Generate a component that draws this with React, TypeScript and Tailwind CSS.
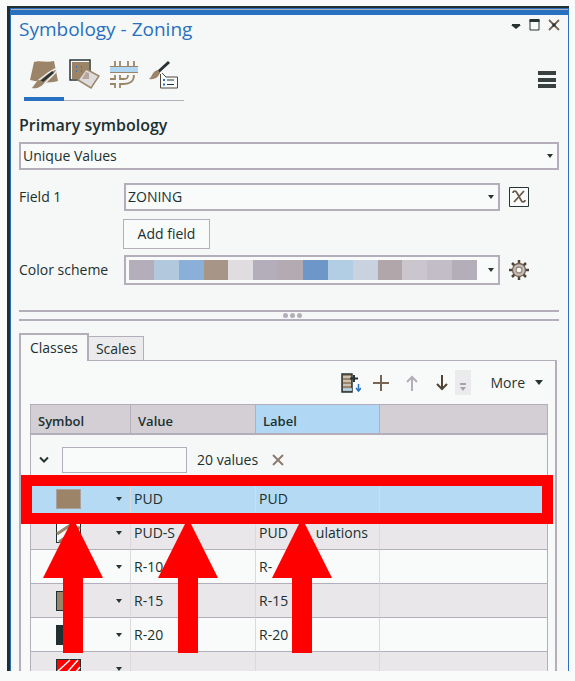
import React from "react";

const rows = [
  { value: "PUD", label: "PUD", tail: "", symbol: "solid", bg: "bg-[#b5daf3]" },
  { value: "PUD-S", label: "PUD", tail: "ulations", symbol: "hatch", bg: "bg-[#e9e7e9]" },
  { value: "R-10", label: "R-", tail: "", symbol: "none", bg: "bg-[#f9fbfa]" },
  { value: "R-15", label: "R-15", tail: "", symbol: "outlined", bg: "bg-[#e9e7e9]" },
  { value: "R-20", label: "R-20", tail: "", symbol: "dark", bg: "bg-[#f9fbfa]" },
  { value: "", label: "", tail: "", symbol: "redhatch", bg: "bg-[#e9e7e9]" },
];

const ramp = [
  "bg-[#b4aeba]", "bg-[#b2c8dc]", "bg-[#8ab0d9]", "bg-[#a79588]", "bg-[#e0dde1]",
  "bg-[#b4aeba]", "bg-[#b3aab2]", "bg-[#6d97c9]", "bg-[#b1cee5]", "bg-[#c9d3e0]",
  "bg-[#b1a6a9]", "bg-[#cbc6ce]", "bg-[#c3bdc7]", "bg-[#b4aeba]",
];

function Caret() {
  return (
    <svg viewBox="0 0 6 4" className="h-1 w-1.5 shrink-0" aria-hidden="true">
      <path d="M0 0h6L3 4z" fill="#283434" />
    </svg>
  );
}

function Dropdown({ id, label, value }: { id: string; label?: string; value: string }) {
  return (
    <div className="relative min-w-0 flex-1">
      <select
        id={id}
        aria-label={label}
        defaultValue={value}
        className="block h-7 w-full appearance-none border-2 border-[#b4aeba] bg-[#f9fbfa] pl-0.5"
      >
        <option>{value}</option>
      </select>
      <span className="pointer-events-none absolute inset-y-0 right-1.5 flex items-center">
        <Caret />
      </span>
    </div>
  );
}

function Swatch({ kind }: { kind: string }) {
  if (kind === "none") return <span className="h-5 w-[25px]" />;
  const fills: Record<string, string> = { dark: "#203030", redhatch: "#ff0000", hatch: "#f9fbfa" };
  const fill = fills[kind] ?? "#9c8468";
  const edge = kind === "solid" ? "#a9a0a0" : "#203030";
  return (
    <svg viewBox="0 0 25 20" className="h-5 w-[25px] shrink-0" aria-hidden="true">
      <rect x=".5" y=".5" width="24" height="19" fill={fill} stroke={edge} />
      {kind === "hatch" && <path d="M1 11 16 1M3 19 24 4M16 19l8-6" stroke="#9c8468" strokeWidth="3" />}
      {kind === "redhatch" && (
        <path d="M1 13 14 1M6 19 22 1M15 19l9-11" stroke="#f9fbfa" strokeWidth="1.5" />
      )}
    </svg>
  );
}

function Arrow({ className }: { className: string }) {
  return (
    <svg viewBox="0 0 60 134" className={`absolute top-[115px] h-[134px] w-[60px] ${className}`} aria-hidden="true">
      <path d="M30 -1 60 59H40V134H20V59H0z" fill="#ff0000" />
    </svg>
  );
}

function TitleBar() {
  return (
    <header className="flex h-[27px] items-center justify-between pr-2 pl-2">
      <h1 className="text-[19px] leading-6 text-[#2870c0]">Symbology - Zoning</h1>
      <div className="flex items-center gap-2 pb-2">
        <button aria-label="Window options" className="pt-1">
          <svg viewBox="0 0 10 6" className="h-1.5 w-2.5"><path d="M1 0h8v1h1L5 5 0 1h1z" fill="#283434" /></svg>
        </button>
        <button aria-label="Maximize">
          <svg viewBox="0 0 11 12" className="h-3 w-[11px]">
            <path d="M1 1v10h9V1z" fill="#f9fbfa" stroke="#283434" />
            <path d="M.5 1.500h10" stroke="#283434" strokeWidth="3" />
          </svg>
        </button>
        <button aria-label="Close">
          <svg viewBox="0 0 12 12" className="h-3 w-3"><path d="m1 1 10 10M11 1 1 11" stroke="#786450" strokeWidth="1.8" /><path d="m4.500 4.500 3 3m0-3-3 3" stroke="#283434" strokeWidth="1.5" /></svg>
        </button>
      </div>
    </header>
  );
}

function ModeBar() {
  return (
    <div className="flex h-[59px] items-end justify-between pr-3 pl-[13px]">
      <nav className="flex h-[43px] w-40 items-start border-b border-[#b4aeba]">
        <button aria-label="Primary symbology" className="flex h-[43px] w-10 items-start justify-center border-b-4 border-[#2870c0]">
          <svg viewBox="0 0 30 32" className="h-8 w-[30px]">
            <path d="M5 4c5-2 12 1 20-1l4 20c-6 2-16 2-28-1z" fill="#9c8468" />
            <path d="M26 11c2 0 2 2 0 4l-9 9c-2 3-6 6-14 6l7-8 9-7z" fill="#9c8468" stroke="#f0efef" strokeWidth="1.5" />
            <path d="m24 14-12 10" stroke="#283434" strokeWidth="2.5" />
            <path d="m13 23-4-1-6 8c5 1 9-1 12-5z" fill="#9c8468" />
          </svg>
        </button>
        <button aria-label="Vary by attribute" className="flex h-10 w-10 items-start justify-center">
          <svg viewBox="0 0 32 32" className="h-8 w-8">
            <path d="M2 2h20v20H2z" fill="#f9fbfa" stroke="#283434" strokeWidth="1.5" />
            <path d="M4 4h17v17H4z" fill="#9c8468" />
            <path d="M8 9h1m4 0h1M8 13h1m4 0h1" stroke="#2870c0" strokeWidth="1.5" />
            <path d="m18 11 13 7-8 12-13-8z" fill="#dedbdd" stroke="#9c8468" strokeWidth="1.5" />
            <path d="m18 14-4 7h7v-6z" fill="#b4a69a" />
          </svg>
        </button>
        <button aria-label="Symbol layer drawing" className="flex h-10 w-10 items-start justify-center pt-0.5">
          <svg viewBox="0 0 28 30" className="h-[30px] w-7" fill="none">
            <path d="M5 1v8M10 1v8M18 1v8M24 1v8M5 15v4H0M10 15v4h4c4 0 4-2 4-4M24 15c0 6-4 9-10 9h-4v4M0 24h5v4" stroke="#9c8468" strokeWidth="1.8" />
            <path d="M0 9.500h28" stroke="#9c8468" strokeWidth="7" />
            <path d="M0 9.500h28" stroke="#b0d8f4" strokeWidth="5" />
          </svg>
        </button>
        <button aria-label="Advanced symbology options" className="flex h-10 w-10 items-start justify-center pt-0.5">
          <svg viewBox="0 0 30 30" className="h-[30px] w-[30px]" fill="none">
            <path d="M20 2 8 13" stroke="#283434" strokeWidth="3" />
            <path d="M9 10c-6 1-5 6-9 9 5 1 9-1 11-6z" fill="#9c8468" />
            <path d="M11.500 14v14h17V17H17l-4-4" fill="#f9fbfa" stroke="#504840" />
            <path d="M14 20h2m-2 4.500h2" stroke="#2870c0" strokeWidth="2" />
            <path d="M18 20h7m-7 4.500h7" stroke="#283434" />
          </svg>
        </button>
      </nav>
      <button aria-label="Menu" className="mb-[13px] flex h-[17px] w-[18px] flex-col justify-between">
        <span className="h-1 w-full bg-[#384040]" />
        <span className="h-1 w-full bg-[#384040]" />
        <span className="h-1 w-full bg-[#384040]" />
      </button>
    </div>
  );
}

function ClassToolbar() {
  return (
    <div className="flex h-[43px] items-center justify-end pr-3 text-[#283434]">
      <button aria-label="Add all values" className="mr-3">
        <svg viewBox="0 0 20 20" className="h-5 w-5" fill="none">
          <path d="M1 1h10v18H1z" fill="#9c8468" stroke="#283434" strokeWidth="1.5" />
          <path d="M2 4h8M2 8h8M2 12h8" stroke="#f9fbfa" strokeWidth="1.2" />
          <path d="M2 16.500h9" stroke="#b0d8f4" strokeWidth="2.500" />
          <path d="M9 5.500h8M13 2v7" stroke="#283434" strokeWidth="2" />
          <path d="M17.500 11v7M15 15l2.500 3 2.500-3" stroke="#2870c0" strokeWidth="1.500" />
        </svg>
      </button>
      <button aria-label="Add values" className="mr-4">
        <svg viewBox="0 0 16 16" className="h-4 w-4"><path d="M0 8h16M8 0v16" stroke="#786450" strokeWidth="2" /></svg>
      </button>
      <button aria-label="Move up" disabled className="mr-4">
        <svg viewBox="0 0 14 16" className="h-4 w-3.5" fill="none"><path d="M7 16V2M2 7l5-5 5 5" stroke="#b4aeba" strokeWidth="2" /></svg>
      </button>
      <button aria-label="Move down" className="mr-1.5">
        <svg viewBox="0 0 14 16" className="h-4 w-3.5" fill="none"><path d="M7 0v14M2 9l5 5 5-5" stroke="#504434" strokeWidth="2" /></svg>
      </button>
      <button aria-label="More move options" className="mr-[19px] flex h-[25px] w-4 items-center justify-center bg-[#ebeaec] pt-2">
        <svg viewBox="0 0 6 8" className="h-2 w-1.5"><path d="M0 0h6v2H0zM0 4h6L3 8z" fill="#aaa2a8" /></svg>
      </button>
      <button className="flex items-center gap-2.5">
        More
        <svg viewBox="0 0 8 5" className="h-[5px] w-2" aria-hidden="true"><path d="M0 0h8L4 5z" fill="#283434" /></svg>
      </button>
    </div>
  );
}

function ClassTable() {
  return (
    <div className="relative mr-[7px] ml-[9px]">
      <table className="w-full table-fixed border-separate border-spacing-0 border border-[#b4aeba] text-left">
        <colgroup>
          <col className="w-[100px]" />
          <col className="w-[125px]" />
          <col className="w-[124px]" />
          <col />
        </colgroup>
        <thead>
          <tr className="h-[30px] bg-[#d3cfd5] text-[13px]">
            <th className="border-r border-b-2 border-[#b4aeba] p-0 pt-1 pl-[7px] font-semibold">Symbol</th>
            <th className="border-r border-b-2 border-[#b4aeba] p-0 pt-1 pl-[7px] font-semibold">Value</th>
            <th className="border-r border-b-2 border-[#b4aeba] bg-[#b0d8f4] p-0 pt-1 pl-[7px] font-semibold">Label</th>
            <th className="border-b-2 border-[#b4aeba]" aria-label="Options" />
          </tr>
        </thead>
        <tbody>
          <tr className="h-[47px] bg-[#f6f8f7]">
            <td colSpan={4} className="p-0">
              <div className="flex items-center pt-0.5 pl-2">
                <button aria-label="Collapse group" className="mr-[13px]">
                  <svg viewBox="0 0 10 8" className="h-2 w-2.5" fill="none"><path d="m1 1.500 4 4 4-4" stroke="#283434" strokeWidth="2" /></svg>
                </button>
                <input aria-label="Group heading" className="h-[26px] w-[125px] border border-[#b4aeba] bg-[#f9fbfa] px-1" />
                <span className="ml-2.5">20 values</span>
                <button aria-label="Remove group" className="ml-3.5">
                  <svg viewBox="0 0 12 12" className="h-3 w-3"><path d="m1 1 10 10M11 1 1 11" stroke="#88786c" strokeWidth="1.800" /></svg>
                </button>
              </div>
            </td>
          </tr>
          {rows.map((row) => (
            <tr key={row.symbol} className={`h-[34px] ${row.bg}`}>
              <td className="border-r border-b border-r-[#dcd9dc] border-b-[#b4aeba] p-0">
                <div className="flex items-center justify-between pr-2 pl-[25px]">
                  <Swatch kind={row.symbol} />
                  <Caret />
                </div>
              </td>
              <td className="border-r border-b border-r-[#dcd9dc] border-b-[#b4aeba] p-0 pl-[3px]">{row.value}</td>
              <td className="border-r border-b border-r-[#dcd9dc] border-b-[#b4aeba] p-0 pl-[3px]">
                <span className="flex gap-7">
                  <span>{row.label}</span>
                  {row.tail && <span>{row.tail}</span>}
                </span>
              </td>
              <td className="border-b border-[#b4aeba] p-0" />
            </tr>
          ))}
        </tbody>
      </table>
      <div className="pointer-events-none absolute top-[71px] -right-[5px] -left-[9px] h-[49px] border-[11px] border-[#ff0000]" />
      <Arrow className="left-[13px]" />
      <Arrow className="left-[128px]" />
      <Arrow className="left-[242px]" />
    </div>
  );
}

export default function App() {
  return (
    <main className="flex h-screen flex-col overflow-hidden bg-[#f9fbfa] pt-1.5 pr-1.5 pb-2.5 pl-[7px] font-['Open_Sans','Noto_Sans',sans-serif] text-sm leading-4 text-[#203030]">
      <section className="min-h-0 flex-1 overflow-hidden border-t-2 border-l-[3px] border-[#203030]">
        <div className="border-x border-t border-[#2870c0] bg-[#f6f8f7]">
          <div className="h-1.5 border-t border-[#b4aeba] bg-[#2870c0]" />
          <TitleBar />
          <ModeBar />
          <div className="pt-3.5 pr-[9px] pl-2">
            <h2 className="text-base leading-5 font-semibold">Primary symbology</h2>
            <div className="mt-[7px] flex">
              <Dropdown id="symbology" label="Primary symbology" value="Unique Values" />
            </div>
            <div className="mt-[13px] flex items-center">
              <label htmlFor="field1" className="w-[105px]">Field 1</label>
              <Dropdown id="field1" value="ZONING" />
              <button aria-label="Set an expression" className="mr-[30px] ml-[9px]">
                <svg viewBox="0 0 20 20" className="h-5 w-5" fill="none">
                  <path d="M.5.500h19v19H.5z" fill="#f9fbfa" stroke="#283434" />
                  <path d="M4 6c0-2 3-3 4 0l4 7c1 3 4 2 4 0M15 4 5 15" stroke="#685848" strokeWidth="1.800" />
                </svg>
              </button>
            </div>
            <button className="mt-2 ml-[104px] block h-[30px] w-[87px] border border-[#b4aeba] bg-[#f9fbfa]">Add field</button>
            <div className="mt-1.5 flex items-center">
              <span id="scheme-label" className="w-[105px]">Color scheme</span>
              <button aria-labelledby="scheme-label" className="flex h-[30px] min-w-0 flex-1 items-center border-2 border-[#b4aeba] bg-[#f9fbfa] pr-1 pl-[3px]">
                <span className="mr-[11px] flex h-5 flex-1">
                  {ramp.map((color, index) => (
                    <span key={index} className={`flex-1 ${color}`} />
                  ))}
                </span>
                <Caret />
              </button>
              <button aria-label="Color scheme options" className="mr-[30px] ml-[9px]">
                <svg viewBox="0 0 20 20" className="h-5 w-5" fill="none">
                  <path d="M10 0v4M10 16v4M0 10h4M16 10h4M3 3l3 3M14 14l3 3M3 17l3-3M14 6l3-3" stroke="#504438" strokeWidth="2.500" />
                  <circle cx="10" cy="10" r="5" stroke="#c4bec8" strokeWidth="3" />
                  <circle cx="10" cy="10" r="6.500" stroke="#786450" strokeWidth="1.300" />
                  <circle cx="10" cy="10" r="3" fill="#f9fbfa" stroke="#9c8468" strokeWidth="1.300" />
                </svg>
              </button>
            </div>
            <div role="separator" className="mt-[25px] flex h-[11px] items-start justify-center gap-0.5 border-y-2 border-[#b4aeba] pt-px pl-1.5">
              <span className="h-[5px] w-[5px] rounded-full bg-[#b4aeba]" />
              <span className="h-[5px] w-[5px] rounded-full bg-[#b4aeba]" />
              <span className="h-[5px] w-[5px] rounded-full bg-[#b4aeba]" />
            </div>
            <div role="tablist" className="mt-3 flex items-end">
              <button role="tab" aria-selected="true" className="h-7 w-[70px] border-x-2 border-t-2 border-[#b4aeba] bg-[#f8faf9]">Classes</button>
              <button role="tab" aria-selected="false" className="h-[25px] w-[55px] border-y border-r border-[#b4aeba] bg-[#ebeaec]">Scales</button>
              <div className="mr-0.5 flex-1 border-t border-[#b4aeba]" />
            </div>
            <div role="tabpanel" className="mr-0.5 border-x-2 border-[#b4aeba] bg-[#f8faf9]">
              <ClassToolbar />
              <ClassTable />
            </div>
          </div>
        </div>
      </section>
    </main>
  );
}
